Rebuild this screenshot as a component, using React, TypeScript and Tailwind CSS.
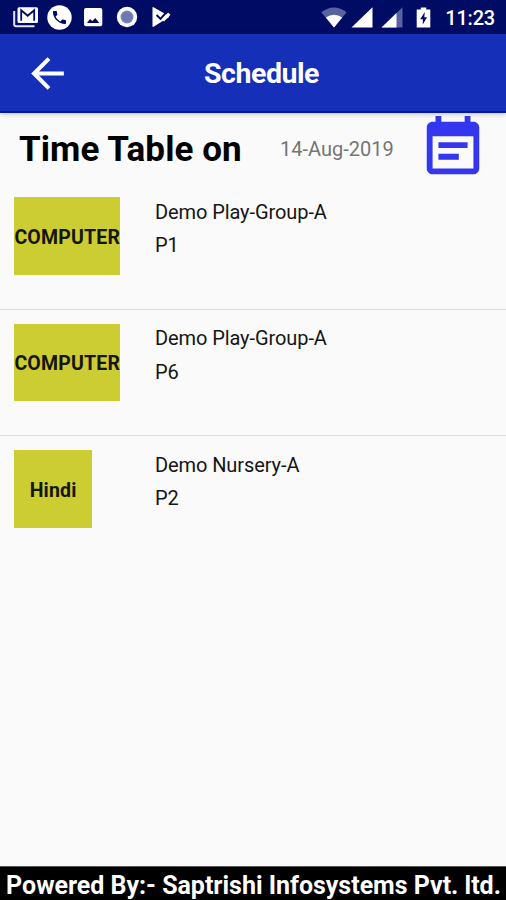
type Period = {
  id: number;
  subject: string;
  group: string;
  period: string;
};

const PERIODS: Period[] = [
  { id: 1, subject: "COMPUTER", group: "Demo Play-Group-A", period: "P1" },
  { id: 2, subject: "COMPUTER", group: "Demo Play-Group-A", period: "P6" },
  { id: 3, subject: "Hindi", group: "Demo Nursery-A", period: "P2" },
];

const StatusBar = () => (
  <div className="h-[34px] shrink-0 bg-[#000b63] flex items-center justify-between pl-[13px] pr-[11px] text-white">
    <div className="flex items-center">
      {/* mail */}
      <svg width="26" height="22" viewBox="0 0 26 22" fill="none">
        <path d="M1.2 5v13.500q0 1.800 1.800 1.800h18.500" stroke="#dfe4ff" strokeWidth="2" />
        <rect x="4.500" y="1.200" width="20.500" height="15.800" rx="1.500" fill="#fff" />
        <path d="M8.200 14.800V4.200l6.500 5.600 6.500-5.600v10.600" stroke="#000b63" strokeWidth="1.800" />
      </svg>
      {/* call */}
      <svg className="ml-[8px]" width="25" height="25" viewBox="0 0 25 25">
        <circle cx="12.500" cy="12.500" r="12.200" fill="#fff" />
        <path
          transform="translate(3.700 3.700) scale(.73)"
          d="M6.620 10.790c1.440 2.830 3.760 5.140 6.590 6.590l2.200-2.200c.27-.27.67-.36 1.020-.24 1.120.37 2.330.57 3.570.57.55 0 1 .45 1 1V20c0 .55-.45 1-1 1-9.390 0-17-7.610-17-17 0-.55.45-1 1-1h3.500c.55 0 1 .45 1 1 0 1.250.2 2.450.57 3.570.11.35.03.74-.25 1.020l-2.200 2.200z"
          fill="#000b63"
        />
      </svg>
      {/* photo */}
      <svg className="ml-[9px]" width="24" height="24" viewBox="0 0 24 24" fill="#fff">
        <path d="M21.300 19.300V5c0-1.100-.9-2-2-2H5c-1.100 0-2 .9-2 2v14.300c0 1.100.9 2 2 2h14.300c1.100 0 2-.9 2-2zM6 18l3-4 2.300 2 3-3 4 5z" />
      </svg>
      <svg className="ml-[11px]" width="22" height="22" viewBox="0 0 22 22">
        <circle cx="11" cy="11" r="10.200" fill="#fff" />
        <circle cx="11" cy="11" r="6.500" fill="#7d84bb" />
        <circle cx="11" cy="11" r="5" fill="#6f77b2" />
      </svg>
      {/* play store */}
      <svg className="ml-[13px]" width="20" height="22" viewBox="0 0 20 22">
        <path d="M1.500 1.800q0-1.200 1-.6L17.500 9.800q1.300.9 0 1.800L2.500 20.800q-1 .4-1-.6z" fill="#fff" />
        <path d="M17 6.500l2.500 2.300-6.500 6.700-2-2z" fill="#fff" />
        <path d="M5.500 9l4 3.800L16.500 5" fill="none" stroke="#000b63" strokeWidth="1.900" />
      </svg>
    </div>
    <div className="flex items-center">
      <svg width="26" height="21" viewBox="0 0 26 21">
        <path d="M13 20.500L.3 5.200Q13-4.200 25.700 5.200z" fill="#59619f" />
        <path d="M13 20.500L4.800 10.600Q13 4.800 21.200 10.600z" fill="#fff" />
      </svg>
      <svg className="ml-[4px]" width="22" height="21" viewBox="0 0 22 21">
        <path d="M.5 20.500L21.500.3v20.200z" fill="#fff" />
      </svg>
      <svg className="ml-[8px]" width="22" height="21" viewBox="0 0 22 21">
        <path d="M.5 20.500L21.500.3v20.200z" fill="#59619f" />
        <path d="M.5 20.500L15.500 6v14.500z" fill="#fff" />
      </svg>
      <svg className="ml-[13px]" width="15" height="21" viewBox="0 0 15 21">
        <path d="M.7 2.500h4.100V.5h5.400v2h4.100v18H.7z" fill="#fff" />
        <path d="M8.800 5L4.200 12.200h2.600v5.300l4.200-7.300H8.300z" fill="#000b63" />
      </svg>
      <span className="ml-[14px] pt-[2px] text-[20px] leading-none font-medium tracking-[-0.2px] whitespace-nowrap">11:23</span>
    </div>
  </div>
);

const AppBar = () => (
  <header className="relative z-10 h-[79px] shrink-0 bg-[#152fb9] border-b-2 border-[#0718a0] shadow-[0_1px_5px_rgba(0,0,0,0.25)] grid grid-cols-[1fr_auto_1fr] items-center">
    <button type="button" aria-label="Back" className="ml-[23px] mt-[2px] w-[49px] h-[49px]">
      <svg width="49" height="49" viewBox="0 0 24 24" fill="#fff">
        <path d="M20 11H7.830l5.590-5.590L12 4l-8 8 8 8 1.410-1.410L7.830 13H20v-2z" />
      </svg>
    </button>
    <h1 className="pl-[17px] pt-[4px] text-[28.500px] font-bold tracking-[-0.450px] text-white whitespace-nowrap">Schedule</h1>
    <span />
  </header>
);

const DateRow = () => (
  <div className="h-[70px] shrink-0 flex items-start pl-[19px]">
    <h2 className="w-[261px] pt-[15px] text-[35px] leading-[44px] font-bold tracking-[0.080px] text-black whitespace-nowrap">
      Time Table on
    </h2>
    <span className="w-[137.500px] pt-[22px] text-[20px] leading-[28px] text-[#757575] whitespace-nowrap">
      14-Aug-2019
    </span>
    <button type="button" aria-label="Pick date">
      <svg width="70" height="70" viewBox="0 0 24 24" fill="#3437ed">
        <path d="M17 10H7v2h10v-2zm2-7h-1V1h-2v2H8V1H6v2H5c-1.110 0-1.990.9-1.990 2L3 19c0 1.100.89 2 2 2h14c1.100 0 2-.9 2-2V5c0-1.100-.9-2-2-2zm0 16H5V8h14v11zm-5-5H7v2h7v-2z" />
      </svg>
    </button>
  </div>
);

const PeriodRow = ({ item }: { item: Period }) => (
  <li className="h-[126.500px] flex items-start pt-[14px] pl-[14.400px] border-b border-[#dcdcdc] last:border-b-0">
    <div className="w-[140.500px] flex">
      <div className="h-[77.500px] min-w-[77.500px] pt-[3px] flex items-center justify-center bg-[#cccc33] text-[19.500px] tracking-[0.200px] font-bold text-[#15150a]">
        {item.subject}
      </div>
    </div>
    <div className="text-[20px] leading-[33.500px] tracking-[-0.080px] text-[#151515] -mt-[1.500px]">
      <p>{item.group}</p>
      <p>{item.period}</p>
    </div>
  </li>
);

export default function App() {
  return (
    <div className="w-full h-screen flex flex-col overflow-hidden bg-[#fafafa] font-[Roboto,sans-serif]">
      <StatusBar />
      <AppBar />
      <DateRow />
      <ul className="flex-1">
        {PERIODS.map((p) => (
          <PeriodRow key={p.id} item={p} />
        ))}
      </ul>
      <footer className="h-[34px] shrink-0 bg-black border-t border-[#555] flex items-center justify-center pt-[3px] pl-[1px] text-[25px] leading-none font-bold tracking-[-0.020px] text-white whitespace-nowrap">
        Powered By:- Saptrishi Infosystems Pvt. ltd.
      </footer>
    </div>
  );
}
